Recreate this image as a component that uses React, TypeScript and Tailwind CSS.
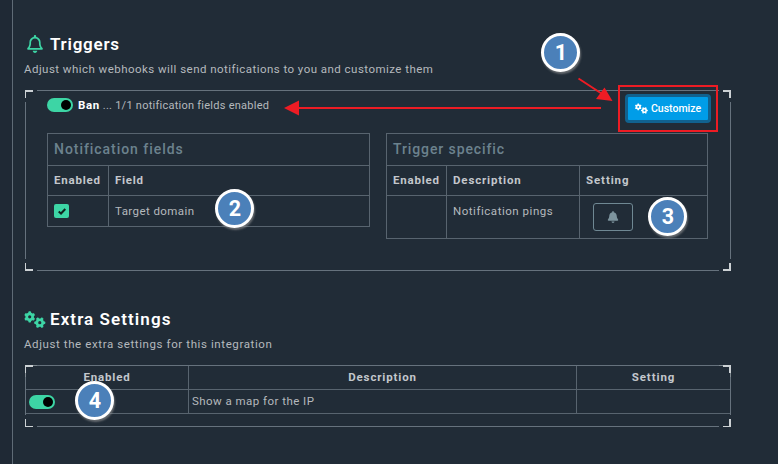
import type { ReactNode } from "react";
import { FaBell, FaGears, FaRegBell } from "react-icons/fa6";

function Toggle() {
  return (
    <span className="flex h-[14px] w-[26px] shrink-0 items-center justify-end rounded-full bg-[#3dd5a5] pr-[2px]">
      <span className="size-[10px] rounded-full bg-black" />
    </span>
  );
}

function Frame({ className, thin, children }: { className: string; thin?: boolean; children: ReactNode }) {
  return (
    <div className={`relative w-[706px] ${className}`}>
      {children}
      <div className="pointer-events-none absolute inset-0">
        <i className="absolute top-0 left-3 right-3 h-px bg-[#66727d]" />
        <i className="absolute bottom-0 left-3 right-3 h-px bg-[#66727d]" />
        <i className="absolute top-3 bottom-3 left-0 w-px bg-[#66727d]" />
        <i className="absolute top-3 bottom-3 right-0 w-px bg-[#66727d]" />
        <i className="absolute top-0 left-0 size-2 border-t-2 border-l border-[#ccd1d4]" />
        <i className="absolute top-0 right-0 size-2 border-t-2 border-r-2 border-[#ccd1d4]" />
        <i className={`absolute bottom-0 left-0 size-2 border-l border-[#ccd1d4] ${thin ? "border-b" : "border-b-2"}`} />
        <i className={`absolute bottom-0 right-0 size-2 border-r-2 border-[#ccd1d4] ${thin ? "border-b" : "border-b-2"}`} />
      </div>
    </div>
  );
}

function Marker({ n, className }: { n: number; className: string }) {
  return (
    <div
      className={`absolute flex size-[39px] items-center justify-center rounded-full border-3 border-white bg-[#4b80b9] pt-px pl-px text-[21.5px] leading-none font-bold text-white shadow-[1px_2px_2px_rgba(150,150,150,0.6)] ${className}`}
    >
      {n}
    </div>
  );
}

const head = "text-[11.5px] font-bold text-[#c3c7cc]";
const body = "text-[11.5px] text-[#b5b9bd]";
const line = "border-[#58646f]";

export default function App() {
  return (
    <div className="relative flex h-[464px] w-[778px] overflow-hidden bg-[#212c37] font-['Roboto',sans-serif] whitespace-nowrap">
      <aside className="w-[13px] shrink-0 border-r border-[#5f6b76] bg-[#1f2935]" />
      <main className="flex flex-col pl-[12px]">
        <section className="flex h-[90px] flex-col pt-[34px]">
          <h2 className="flex h-5 items-center text-[17px] leading-5 font-semibold tracking-[0.75px] text-white">
            <FaRegBell className="mr-[6px] ml-px size-[18px] text-[#3dd5a5]" />
            Triggers
          </h2>
          <p className="mt-[7px] -ml-px text-[11.5px] leading-4 tracking-[0.46px] text-[#b5b9bd]">
            Adjust which webhooks will send notifications to you and customize them
          </p>
        </section>

        <Frame className="h-[181px]">
          <div className="flex h-[43px] justify-between pr-[20px] pl-[22px]">
            <div className="flex h-[30px] items-center">
              <Toggle />
              <span className="ml-[5px] pt-[2px] text-[11.5px] font-bold tracking-[0.6px] text-white">Ban</span>
              <span className="ml-[3px] pt-[2px] text-[11px] tracking-[0.25px] text-[#b5b9bd]">... 1/1 notification fields enabled</span>
            </div>
            <button className="mt-[4px] flex h-[29px] w-[86px] items-center justify-center gap-[3px] rounded-[4px] border-3 border-[#11628f] bg-[#009de8] text-[10.5px] font-medium text-white">
              <FaGears className="h-[11px] w-[13px]" />
              Customize
            </button>
          </div>
          <div className="flex items-start gap-4 pl-[22px]">
            <div className={`w-[323px] border ${line}`}>
              <div className="h-[31px] pl-[6px] text-[14px] leading-[31px] font-medium tracking-[0.95px] text-[#6c828e]">Notification fields</div>
              <div className={`grid h-[30px] grid-cols-[60px_1fr] border-t leading-[29px] ${line} ${head}`}>
                <span className="pl-[6px] tracking-[0.8px]">Enabled</span>
                <span className={`border-l pl-[6px] tracking-[0.7px] ${line}`}>Field</span>
              </div>
              <div className={`grid h-[31px] grid-cols-[60px_1fr] border-t leading-[31px] ${line} ${body}`}>
                <span className="flex items-center pb-px pl-[6px]">
                  <span className="flex h-[14px] w-[15px] items-center justify-center rounded-[2px] bg-[#3dd5a5]">
                    <svg viewBox="0 0 8 7" className="h-[7px] w-[8px]" fill="none" stroke="#10231f" strokeWidth="2">
                      <path d="M0.700 3.500l2.300 2L7.300 1" />
                    </svg>
                  </span>
                </span>
                <span className={`border-l pl-[6px] tracking-[0.43px] ${line}`}>Target domain</span>
              </div>
            </div>
            <div className={`w-[322px] border ${line}`}>
              <div className="h-[31px] pl-[6px] text-[14px] leading-[31px] font-medium tracking-[0.9px] text-[#6c828e]">Trigger specific</div>
              <div className={`grid h-[30px] grid-cols-[59px_133px_1fr] border-t leading-[29px] ${line} ${head}`}>
                <span className="pl-[6px] tracking-[0.8px]">Enabled</span>
                <span className={`border-l pl-[6px] tracking-[0.85px] ${line}`}>Description</span>
                <span className={`border-l pl-[6px] tracking-[0.9px] ${line}`}>Setting</span>
              </div>
              <div className={`grid h-[43px] grid-cols-[59px_133px_1fr] border-t leading-[31px] ${line} ${body}`}>
                <span />
                <span className={`border-l pl-[6px] tracking-[0.53px] ${line}`}>Notification pings</span>
                <span className={`flex items-center border-l pl-[13px] ${line}`}>
                  <button className="flex h-7 w-10 items-center justify-center rounded-[3px] border border-[#6f8893] pr-px text-[#7d949e]">
                    <FaBell className="size-[12px]" />
                  </button>
                </span>
              </div>
            </div>
          </div>
        </Frame>

        <section className="flex h-[94px] flex-col pt-[38px]">
          <h2 className="flex h-5 items-center text-[17px] leading-5 font-semibold tracking-[1.08px] text-white">
            <FaGears className="mr-[4px] -ml-px h-[17px] w-[22px] text-[#3dd5a5]" />
            Extra Settings
          </h2>
          <p className="mt-[7px] -ml-px text-[11.5px] leading-4 tracking-[0.6px] text-[#b5b9bd]">
            Adjust the extra settings for this integration
          </p>
        </section>

        <Frame className="h-[62px]" thin>
          <div className="border-x border-t border-[#7f8990]">
            <div className={`grid h-[23px] grid-cols-[162px_388px_1fr] text-center leading-[22px] ${head}`}>
              <span className="tracking-[0.8px]">Enabled</span>
              <span className={`border-l tracking-[0.85px] ${line}`}>Description</span>
              <span className={`border-l tracking-[0.9px] ${line}`}>Setting</span>
            </div>
            <div className={`grid h-[25px] grid-cols-[162px_388px_1fr] border-y leading-[23px] ${line} ${body}`}>
              <span className="flex items-center pt-px pl-[3px]"><Toggle /></span>
              <span className={`border-l pl-[3px] tracking-[0.46px] ${line}`}>Show a map for the IP</span>
              <span className={`border-l ${line}`} />
            </div>
          </div>
        </Frame>
      </main>

      <svg className="pointer-events-none absolute inset-0 h-[464px] w-[778px]" viewBox="0 0 778 464">
        <path d="M578.500 78.500L603 94.500M601 108H298" stroke="#ed1c24" strokeWidth="2" fill="none" />
        <path d="M612.500 101L604.500 87.500L596 99ZM284 108L299 100.500V115.500Z" fill="#ed1c24" />
      </svg>
      <div className="absolute top-[85px] left-[618px] h-[47px] w-[100px] border-2 border-[#ed1c24]" />
      <Marker n={1} className="top-[33px] left-[541px]" />
      <Marker n={2} className="top-[189px] left-[215px]" />
      <Marker n={3} className="top-[197px] left-[648px]" />
      <Marker n={4} className="top-[381px] left-[75px]" />
    </div>
  );
}
